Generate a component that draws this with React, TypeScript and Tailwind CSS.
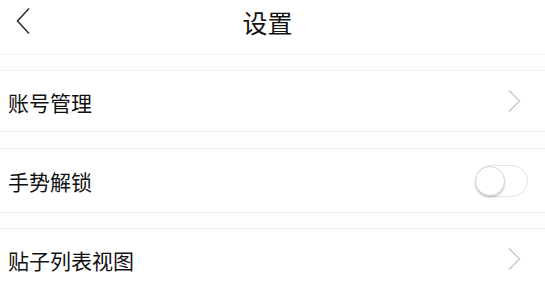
import React from "react";

const font = { fontFamily: '"Noto Sans CJK SC", "Noto Sans", sans-serif' };

function Chevron() {
  return (
    <svg width="14" height="24" viewBox="0 0 14 24" className="mr-[24px]">
      <polyline points="2,1.5 12.5,12 2,22.5" fill="none" stroke="#c8c8c8" strokeWidth="1.4" />
    </svg>
  );
}

function Toggle() {
  return (
    <div className="mr-[17px] relative w-[53px] h-[32px] rounded-full border border-[#e3e3e3] bg-white">
      <div className="absolute left-[-1px] top-[0px] w-[30px] h-[30px] rounded-full bg-white border border-[#d6d6d6] shadow-[0_2px_2px_rgba(0,0,0,0.18)]" />
    </div>
  );
}

function Row({ label, right, h }: { label: string; right: React.ReactNode; h: string }) {
  return (
    <div className={`${h} flex items-center justify-between pl-[8px] bg-white border-y border-[#f0f0f0]`}>
      <span className="text-[21px] text-[#111] leading-none mt-[2px]">{label}</span>
      {right}
    </div>
  );
}

export default function App() {
  return (
    <div className="w-[545px] h-[284px] bg-white overflow-hidden" style={font}>
      <div className="h-[54px] relative flex items-center justify-center">
        <svg width="16" height="28" viewBox="0 0 16 28" className="absolute left-[15px] top-[7px]">
          <polyline points="14,1.5 2.5,14 14,26.5" fill="none" stroke="#333" strokeWidth="1.6" />
        </svg>
        <span className="text-[25px] text-[#111] leading-none mt-[-10px] ml-[-10px]">设置</span>
      </div>
      <div className="h-[16px] bg-[#fdfdfd] border-t border-[#f0f0f0]" />
      <Row h="h-[62px]" label="账号管理" right={<Chevron />} />
      <div className="h-[16px] bg-[#fdfdfd]" />
      <Row h="h-[65px]" label="手势解锁" right={<Toggle />} />
      <div className="h-[15px] bg-[#fdfdfd]" />
      <Row h="h-[62px]" label="贴子列表视图" right={<Chevron />} />
    </div>
  );
}
